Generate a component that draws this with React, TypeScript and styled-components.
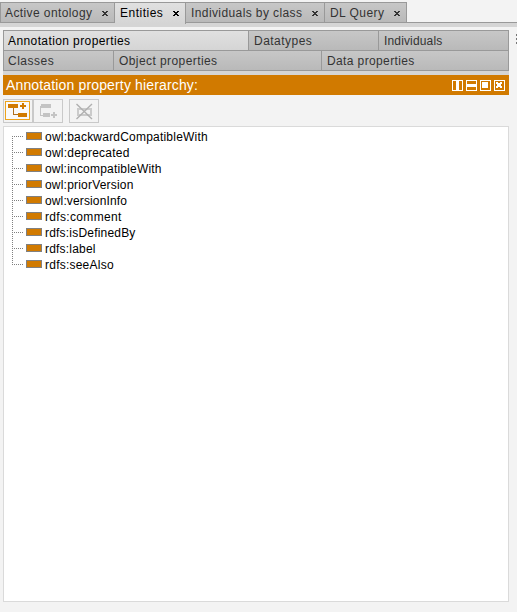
import React from "react";
import styled, { createGlobalStyle, css } from "styled-components";

const Global = createGlobalStyle`
  * { box-sizing: border-box; }
  body {
    margin: 0;
    background: #f3f3f3;
    font-family: "Liberation Sans", Arial, sans-serif;
    font-size: 12px;
    overflow: hidden;
  }
  svg { display: block; }
`;

const Window = styled.div`
  width: 517px;
  height: 612px;
  display: flex;
  flex-direction: column;
  padding-top: 2px;
`;

const idle = css`
  background: linear-gradient(#c7c7c7, #b9b9b9);
  color: #333;
`;
const active = css`
  background: linear-gradient(#e0e0e0, #d5d5d5);
  color: #000;
`;

const TabBar = styled.div`
  display: flex;
  height: 25px;
  background: linear-gradient(#f3f3f3 20px, #999 20px 21px, #d5d5d5 21px);
`;

const Tab = styled.div<{ $width: number; $active?: boolean }>`
  display: flex;
  justify-content: space-between;
  align-items: flex-start;
  width: ${(p) => p.$width}px;
  height: ${(p) => (p.$active ? 22 : 21)}px;
  padding: 1px 6px 0 5px;
  border: solid #999;
  border-width: ${(p) => (p.$active ? "1px 1px 0 0" : "1px 1px 1px 0")};
  ${(p) => (p.$active ? active : idle)}
  &:first-child { border-left-width: 1px; padding-left: 4px; }
  svg { margin-top: 7px; }
`;

const Label = styled.span<{ $spacing: number }>`
  font-size: 12px;
  line-height: 18px;
  white-space: nowrap;
  letter-spacing: ${(p) => p.$spacing}px;
`;

const Views = styled.div`
  display: flex;
  flex-direction: column;
  width: 506px;
  margin: 3px 0 0 3px;
  border: 1px solid #999;
`;

const ViewRow = styled.div`
  display: flex;
  height: 20px;
  &:not(:last-child) { border-bottom: 1px solid #999; }
  &:last-child { height: 19px; }
`;

const ViewTab = styled.div<{ $width: number; $active?: boolean }>`
  display: flex;
  align-items: center;
  width: ${(p) => p.$width}px;
  padding-left: 5px;
  ${(p) => (p.$active ? active : idle)}
  &:first-child { padding-left: 4px; }
  &:not(:last-child) { border-right: 1px solid #999; }
`;

const ViewArea = styled.div`
  display: flex;
`;

const Grip = styled.div`
  display: flex;
  flex-direction: column;
  gap: 2px;
  margin: 7px 0 0 7px;
  i { width: 1px; height: 2px; background: #777; }
`;

const Header = styled.div`
  display: flex;
  align-items: center;
  width: 506px;
  height: 24px;
  margin-left: 3px;
  padding: 0 4px 0 3px;
  border-top: 4px solid #d5d5d5;
  background: #d17a00;
  color: #fff;
`;

const Title = styled.span`
  flex: 1;
  font-size: 14px;
  line-height: 20px;
  letter-spacing: 0.15px;
`;

const Controls = styled.div`
  display: flex;
  gap: 3px;
  padding-top: 1px;
`;

const Toolbar = styled.div`
  display: flex;
  height: 24px;
  margin: 4px 0 0 3px;
`;

const ToolButton = styled.button<{ $gap?: boolean }>`
  width: 30px;
  height: 24px;
  padding: 0;
  border: 1px solid #c9c9c9;
  background: #f3f3f3;
  margin-left: ${(p) => (p.$gap ? 6 : 0)}px;
`;

const Tree = styled.div`
  width: 506px;
  height: 476px;
  margin: 3px 0 0 3px;
  padding: 2px 0 0 8px;
  border: 1px solid #dadada;
  background: #fff;
`;

const Node = styled.div`
  display: flex;
  align-items: center;
  height: 16px;
`;

const Swatch = styled.div`
  width: 16px;
  height: 8px;
  margin: 0 3px 2px 2px;
  border: 1px solid #808080;
  background: #d17a00;
`;

const NodeText = styled.span<{ $spacing: number }>`
  color: #000;
  line-height: 16px;
  letter-spacing: ${(p) => p.$spacing}px;
`;

const Close = () => (
  <svg width="6" height="5" shapeRendering="crispEdges">
    <path d="M0 0h2v1h2V0h2v1H5v1H4v1h1v1h1v1H4V4H2v1H0V4h1V3h1V2H1V1H0z" fill="currentColor" />
  </svg>
);

const Branch = ({ first, last }: { first: boolean; last: boolean }) => (
  <svg width="12" height="16" shapeRendering="crispEdges" stroke="#808080" strokeDasharray="1 1">
    <path d={`M.5 ${first ? 7 : 1}V${last ? 8 : 16}`} />
    <path d="M0 7.5H12" />
  </svg>
);

const FrameIcon = ({ d }: { d: string }) => (
  <svg width="11" height="11" shapeRendering="crispEdges">
    <rect x=".5" y=".5" width="10" height="10" fill="none" stroke="#fff" />
    <path d={d} fill="#fff" />
  </svg>
);

const tabs = [
  { name: "Active ontology", width: 115, spacing: 0.4 },
  { name: "Entities", width: 71, spacing: 0.5, active: true },
  { name: "Individuals by class", width: 139, spacing: 0.4 },
  { name: "DL Query", width: 82, spacing: 0.45 },
];

const viewRows = [
  [
    { name: "Annotation properties", width: 245, spacing: 0.4, active: true },
    { name: "Datatypes", width: 130, spacing: 0.48 },
    { name: "Individuals", width: 129, spacing: 0.15 },
  ],
  [
    { name: "Classes", width: 110, spacing: 0.5 },
    { name: "Object properties", width: 208, spacing: 0.42 },
    { name: "Data properties", width: 186, spacing: 0.38 },
  ],
];

const properties: [string, number][] = [
  ["owl:backwardCompatibleWith", 0.21],
  ["owl:deprecated", 0.23],
  ["owl:incompatibleWith", 0.2],
  ["owl:priorVersion", 0.2],
  ["owl:versionInfo", 0.13],
  ["rdfs:comment", 0.33],
  ["rdfs:isDefinedBy", 0.2],
  ["rdfs:label", 0.2],
  ["rdfs:seeAlso", 0.23],
];

const frames = [
  "M4 1h3v9H4z",
  "M1 4h9v3H1z",
  "M2 2h6v6H2z",
  "M2 2h2v1h2V2h2v2H7v2h1v2H6V7H4v1H2V6h1V4H2z",
];

export default function App() {
  return (
    <Window>
      <Global />
      <TabBar>
        {tabs.map((t) => (
          <Tab key={t.name} $width={t.width} $active={t.active}>
            <Label $spacing={t.spacing}>{t.name}</Label>
            <Close />
          </Tab>
        ))}
      </TabBar>
      <ViewArea>
        <Views>
          {viewRows.map((row, i) => (
            <ViewRow key={i}>
              {row.map((v) => (
                <ViewTab key={v.name} $width={v.width} $active={"active" in v}>
                  <Label $spacing={v.spacing}>{v.name}</Label>
                </ViewTab>
              ))}
            </ViewRow>
          ))}
        </Views>
        <Grip><i /><i /><i /></Grip>
      </ViewArea>
      <Header>
        <Title>Annotation property hierarchy:</Title>
        <Controls>
          {frames.map((d) => <FrameIcon key={d} d={d} />)}
        </Controls>
      </Header>
      <Toolbar>
        <ToolButton aria-label="Add sub property">
          <svg width="28" height="22" shapeRendering="crispEdges">
            <rect x="1.5" y="1.5" width="24" height="18" fill="#fafafa" stroke="#eda31c" />
            <path d="M4 4h10v4H4zM14 13h9v4h-9zM16 5h6v2h-6zM18 3h2v6h-2z" fill="#d17a00" />
            <path d="M9.5 8v7M9 14.500h5" fill="none" stroke="#b06f1c" />
          </svg>
        </ToolButton>
        <ToolButton aria-label="Add sibling property">
          <svg width="28" height="22" shapeRendering="crispEdges" fill="#c4c4c4">
            <path d="M7 4h10v4H7zM9 13h7v4H9zM17 14h6v2h-6zM19 12h2v6h-2z" />
            <path d="M6 6h1v10H6zM6 15h3v1H6z" />
          </svg>
        </ToolButton>
        <ToolButton $gap aria-label="Delete property">
          <svg width="28" height="22" fill="none" stroke="#cbcbcb" strokeWidth="2">
            <rect x="8" y="9" width="13" height="6" />
            <path d="M6.500 4l15.500 15M22 4L6.500 19" strokeWidth="1.400" stroke="#b0b0b0" />
          </svg>
        </ToolButton>
      </Toolbar>
      <Tree>
        {properties.map(([name, spacing], i) => (
          <Node key={name}>
            <Branch first={i === 0} last={i === properties.length - 1} />
            <Swatch />
            <NodeText $spacing={spacing}>{name}</NodeText>
          </Node>
        ))}
      </Tree>
    </Window>
  );
}
